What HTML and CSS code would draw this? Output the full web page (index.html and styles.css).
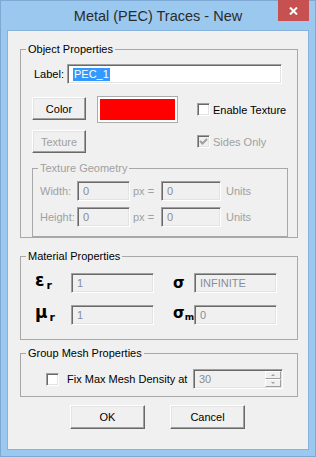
FILE: index.html
```html
<!DOCTYPE html>
<html>
<head>
<meta charset="utf-8">
<link rel="stylesheet" href="styles.css">
</head>
<body>
<div class="window">
  <div class="titlebar">
    <span></span>
    <div class="title">Metal (PEC) Traces - New</div>
    <div class="close"><svg width="9" height="8" viewBox="0 0 9 8"><path d="M1 0.5 L8 7.5 M8 0.5 L1 7.5" stroke="#fff" stroke-width="2"/></svg></div>
  </div>
  <div class="client">
    <fieldset class="group obj">
      <legend>Object Properties</legend>
      <div class="label-row"><span class="lbl">Label:</span><div class="field white label-field"><span class="sel">PEC_1</span></div></div>
      <div class="color-grid">
        <div class="btn color-btn">Color</div>
        <div class="swatch"><div class="red"></div></div>
        <div class="check"><span class="box"></span><span>Enable Texture</span></div>
        <div class="btn dis tex-btn">Texture</div>
        <div class="check dis sides"><span class="box checked"><svg width="11" height="11" viewBox="0 0 11 11"><path d="M2 5 L4.5 7.5 L9 3" fill="none" stroke="#a0a0a0" stroke-width="2"/></svg></span><span>Sides Only</span></div>
      </div>
      <fieldset class="group tex">
        <legend>Texture Geometry</legend>
        <div class="tex-grid">
          <span>Width:</span><div class="field"><span>0</span></div><span class="px">px =</span><div class="field"><span>0</span></div><span class="units">Units</span>
          <span>Height:</span><div class="field"><span>0</span></div><span class="px">px =</span><div class="field"><span>0</span></div><span class="units">Units</span>
        </div>
      </fieldset>
    </fieldset>
    <fieldset class="group mat">
      <legend>Material Properties</legend>
      <div class="mat-grid">
        <span class="sym">ε<span class="sub">r</span></span><div class="field mfield"><span>1</span></div>
        <span class="sym sig">σ</span><div class="field mfield"><span>INFINITE</span></div>
        <span class="sym">μ<span class="sub">r</span></span><div class="field mfield"><span>1</span></div>
        <span class="sym sig">σ<span class="sub subm">m</span></span><div class="field mfield"><span>0</span></div>
      </div>
    </fieldset>
    <fieldset class="group mesh">
      <legend>Group Mesh Properties</legend>
      <div class="mesh-row">
        <span class="box"></span>
        <span class="mesh-text">Fix Max Mesh Density at</span>
        <div class="field spin"><span>30</span>
          <div class="spinner"><div class="sp up"></div><div class="sp down"></div></div>
        </div>
      </div>
    </fieldset>
    <div class="actions">
      <div class="btn big">OK</div>
      <div class="btn big">Cancel</div>
    </div>
  </div>
</div>
</body>
</html>
```
FILE: styles.css
```css
* { box-sizing: border-box; }
body {
  margin: 0;
  width: 316px;
  height: 457px;
  font-family: "Liberation Sans", Arial, sans-serif;
  font-size: 11px;
  color: #000;
}
.window {
  width: 316px;
  height: 457px;
  background: #9bc8ef;
  box-shadow: inset 0 0 0 1px #7ea9d4;
  padding: 0 8px 8px;
  display: flex;
  flex-direction: column;
}
.titlebar {
  height: 31px;
  margin: 0 -8px;
  display: grid;
  grid-template-columns: 1fr auto 1fr;
  align-items: start;
}
.title {
  font-size: 14.5px;
  line-height: 31px;
  padding-top: 1px;
  color: #2b2b2b;
  white-space: nowrap;
}
.close {
  justify-self: end;
  margin-right: 7px;
  width: 31px;
  height: 21px;
  background: #c75050;
  display: flex;
  align-items: center;
  justify-content: center;
}
.client {
  flex: 1;
  background: #f0f0f0;
  padding: 12px 10px 10px 12px;
  box-shadow: 0 0 0 1px #86b2dc;
}
fieldset.group {
  margin: 0;
  padding: 0;
  min-width: 0;
  width: 278px;
  border: 1px solid #a8a8a8;
}
legend {
  margin-left: 5px;
  padding: 0 2px;
  line-height: 13px;
  font-size: 11px;
}
.obj { padding-bottom: 10px; }
.label-row {
  display: flex;
  align-items: center;
  margin-top: 8px;
  padding-left: 13px;
}
.lbl { width: 33px; }
.field {
  height: 20px;
  border: 1px solid;
  border-color: #a0a0a0 #fff #fff #a0a0a0;
  box-shadow: inset 1px 1px 0 #696969, inset -1px -1px 0 #e3e3e3;
  background: #f0f0f0;
  display: flex;
  align-items: center;
  padding-left: 5px;
  color: #8c8c8c;
}
.field.white { background: #fff; }
.label-field { width: 215px; }
.sel {
  background: #3399ff;
  color: #fff;
  line-height: 13px;
  padding: 0 1px;
}
.color-grid {
  display: grid;
  grid-template-columns: 65px 100px 1fr;
  grid-template-rows: 27px 23px;
  row-gap: 7px;
  margin-top: 12px;
  padding-left: 11px;
}
.btn {
  width: 54px;
  height: 23px;
  background: #f0f0f0;
  border: 1px solid;
  border-color: #fff #696969 #696969 #fff;
  box-shadow: inset -1px -1px 0 #a0a0a0, inset 1px 1px 0 #e3e3e3;
  display: flex;
  align-items: center;
  justify-content: center;
}
.color-btn { align-self: start; margin-top: 1px; }
.btn.dis { color: #a0a0a0; }
.tex-btn { grid-column: 1; grid-row: 2; }
.swatch {
  width: 81px;
  height: 27px;
  border: 1px solid #acacac;
  background: #fff;
  padding: 2px;
}
.red { width: 100%; height: 100%; background: #ff0000; }
.check {
  display: flex;
  align-items: center;
  gap: 3px;
  align-self: center;
}
.check.dis { color: #a0a0a0; }
.sides { grid-column: 3; grid-row: 2; }
.box {
  width: 13px;
  height: 13px;
  flex: none;
  background: #fff;
  border: 1px solid;
  border-color: #a0a0a0 #fff #fff #a0a0a0;
  box-shadow: inset 1px 1px 0 #696969, inset -1px -1px 0 #e3e3e3;
  display: flex;
  align-items: center;
  justify-content: center;
}
.box.checked { background: #f0f0f0; }
.tex {
  width: 256px !important;
  margin: 9px 0 0 11px !important;
  padding-bottom: 9px !important;
}
.tex legend { color: #a0a0a0; }
.tex-grid {
  display: grid;
  grid-template-columns: 37px 53px 31px 60px auto;
  grid-auto-rows: 20px;
  row-gap: 6px;
  align-items: center;
  margin-top: 6px;
  padding-left: 7px;
  color: #a0a0a0;
}
.px { padding-left: 3px; }
.units { padding-left: 5px; }
.mat {
  margin-top: 12px !important;
  padding-bottom: 14px !important;
}
.mat-grid {
  display: grid;
  grid-template-columns: 50px 83px 40px 83px;
  grid-auto-rows: 20px;
  row-gap: 12px;
  align-items: center;
  margin-top: 10px;
}
.sym {
  padding-left: 14px;
  font-family: "DejaVu Sans", sans-serif;
  font-weight: bold;
  font-size: 17px;
  line-height: 20px;
}
.sym.sig { padding-left: 19px; font-size: 15px; }
.sub {
  font-size: 11px;
  vertical-align: -3px;
  margin-left: 2px;
}
.subm { font-size: 9px; margin-left: 0; vertical-align: -2px; }
.mfield { color: #8b8b9c; }
.mesh {
  margin-top: 7px !important;
  padding-bottom: 7px !important;
}
.mesh-row {
  display: flex;
  align-items: center;
  margin-top: 9px;
  padding-left: 25px;
}
.mesh-row .box { margin-right: 8px; }
.mesh-text { width: 126px; white-space: nowrap; }
.spin { width: 90px; }
.spinner {
  margin-left: auto;
  margin-right: 1px;
  width: 16px;
  height: 16px;
  display: flex;
  flex-direction: column;
}
.sp {
  height: 8px;
  background: #f0f0f0;
  border: 1px solid;
  border-color: #fff #a0a0a0 #a0a0a0 #fff;
  display: flex;
  align-items: center;
  justify-content: center;
}
.up::after, .down::after {
  content: "";
  width: 0;
  height: 0;
  border-left: 2px solid transparent;
  border-right: 2px solid transparent;
}
.up::after { border-bottom: 2px solid #a0a0a0; }
.down::after { border-top: 2px solid #a0a0a0; }
.actions {
  display: flex;
  justify-content: center;
  gap: 25px;
  margin-top: 8px;
  padding-right: 3px;
}
.btn.big { width: 75px; height: 24px; }
```
